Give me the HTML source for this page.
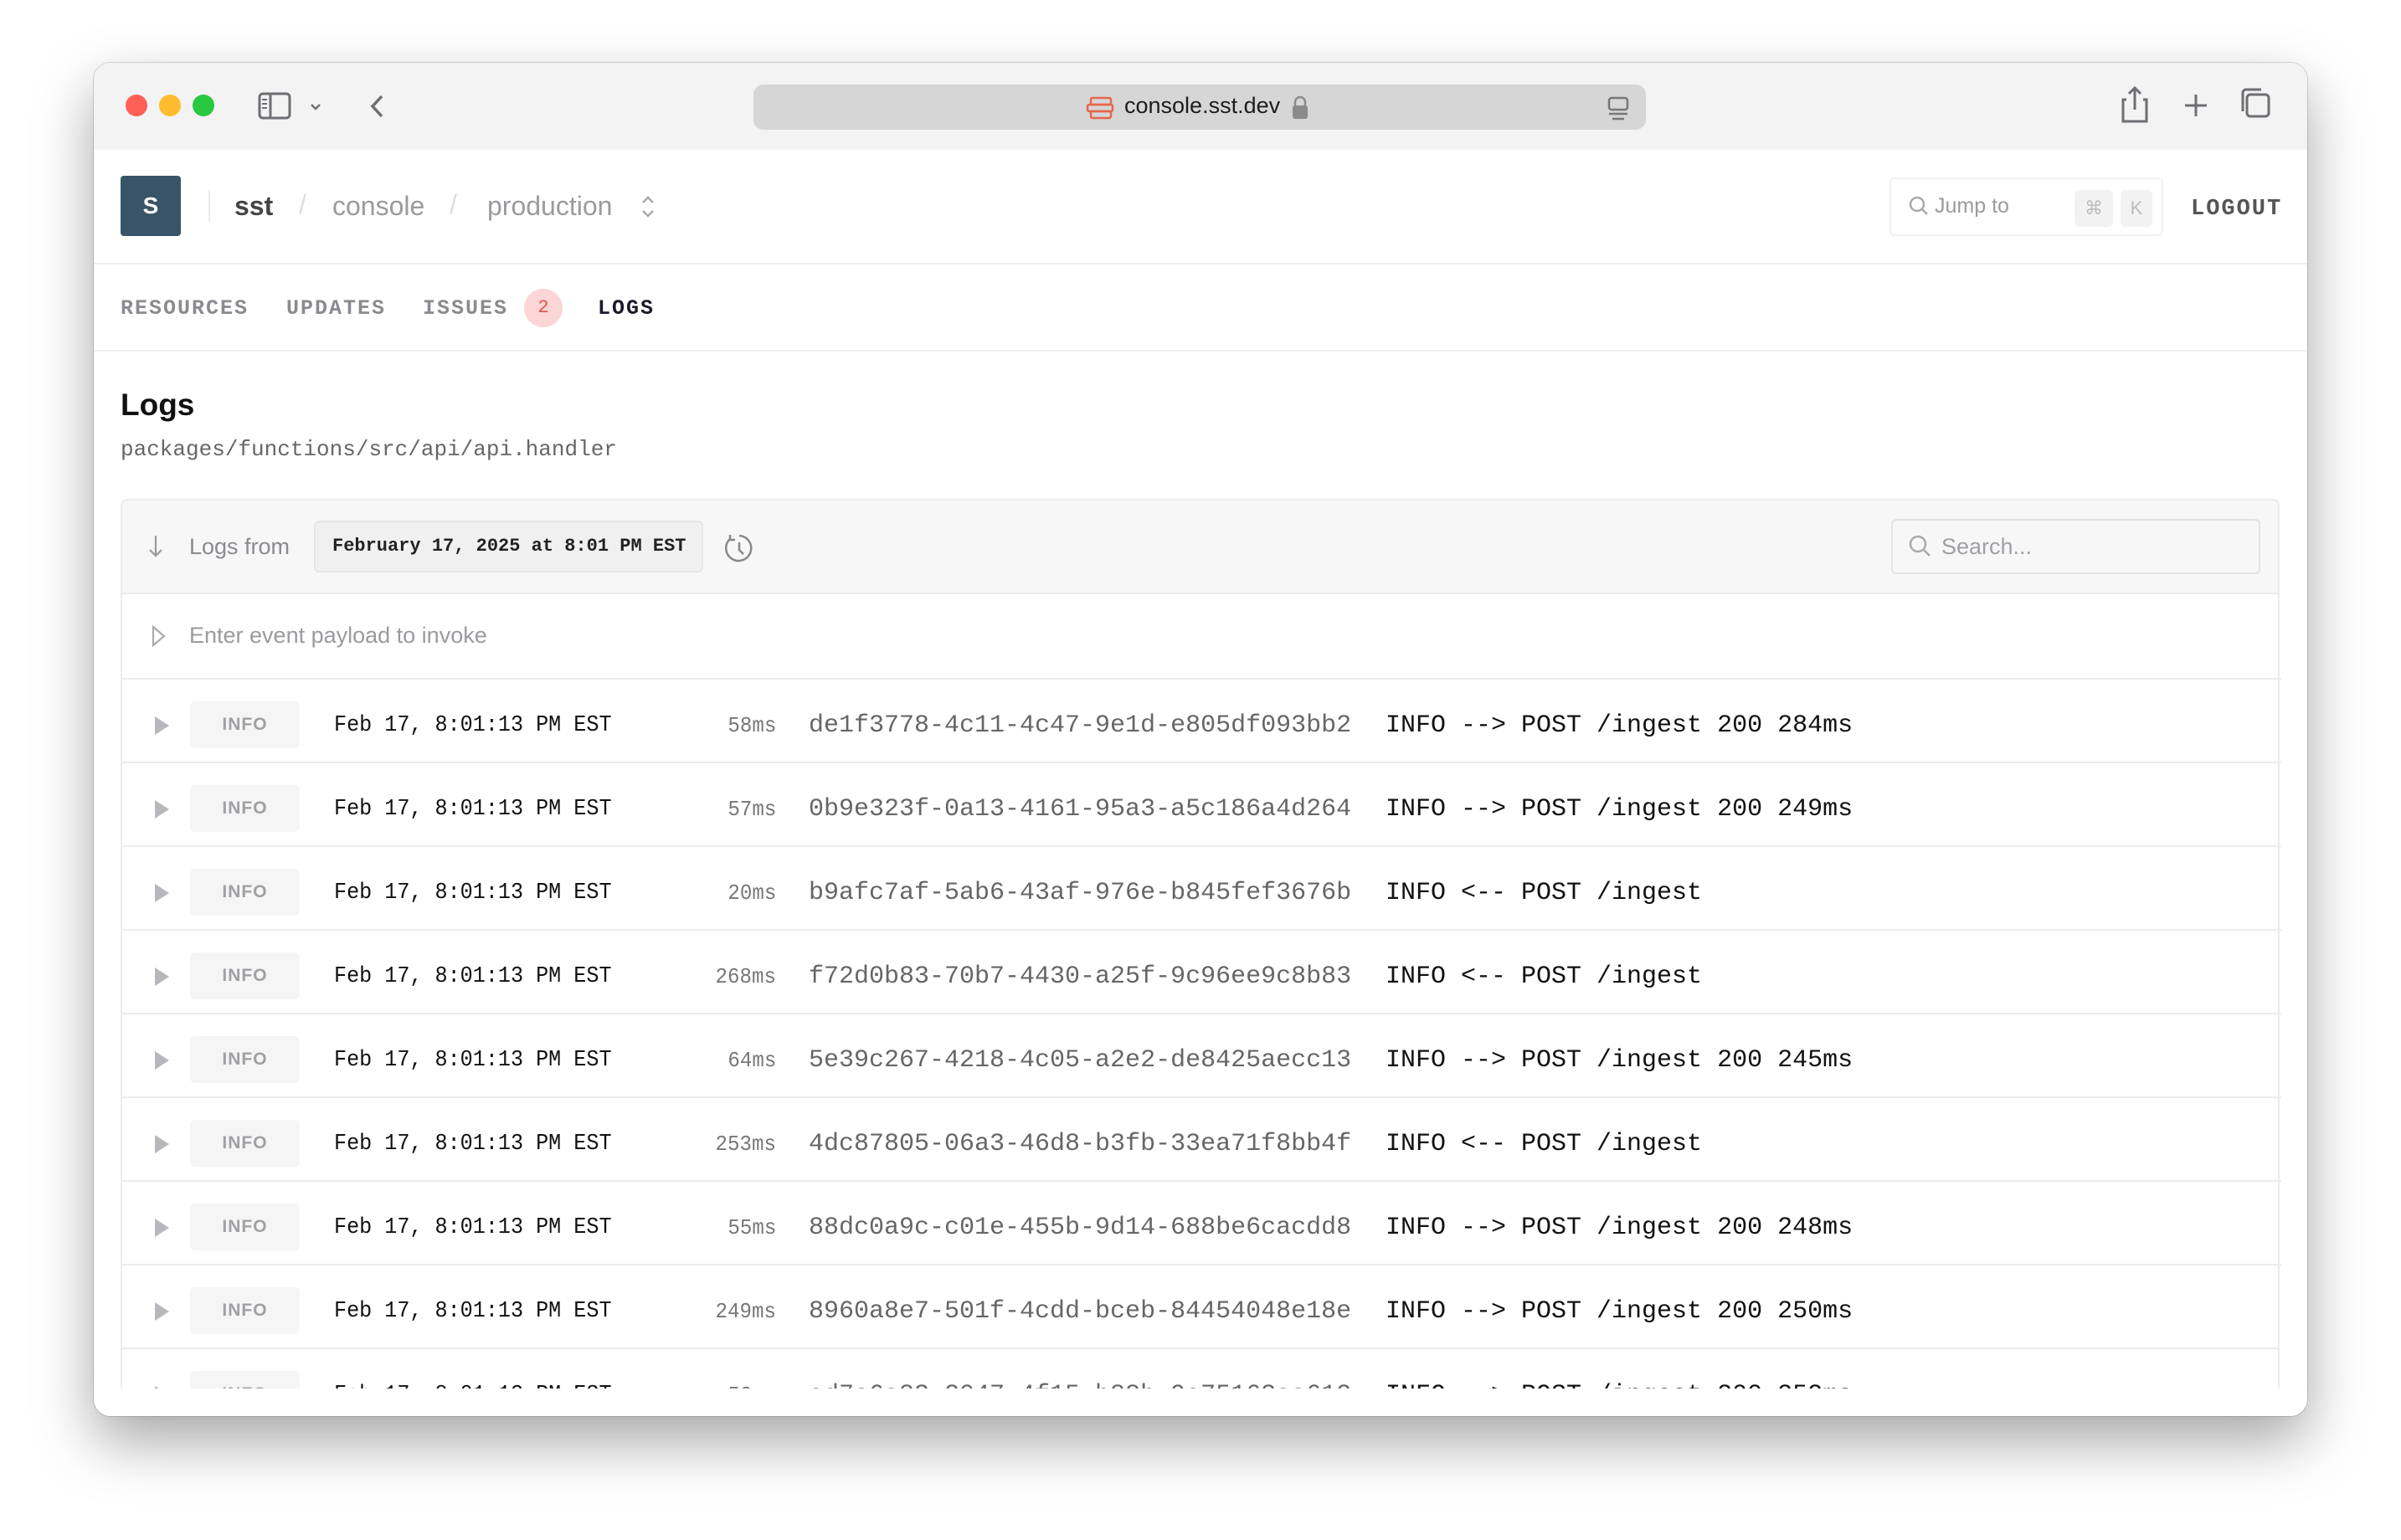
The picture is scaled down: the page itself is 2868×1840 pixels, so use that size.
<!DOCTYPE html>
<html><head><meta charset="utf-8"><style>
*{margin:0;padding:0;box-sizing:border-box}
body{width:2868px;height:1840px;background:#fff;position:relative;overflow:hidden;font-family:"Liberation Sans",sans-serif}
.a{position:absolute}
.win{left:112px;top:75px;width:2644px;height:1617px;border-radius:20px;background:#fff;overflow:hidden;box-shadow:0 30px 70px rgba(0,0,0,.35),0 0 0 1px rgba(0,0,0,.15)}
.bar{left:0;top:0;width:100%;height:104px;background:#f3f3f3}
.mono{font-family:"Liberation Mono",monospace}
.tab{top:279px;font-family:"Liberation Mono",monospace;font-size:25px;letter-spacing:2px;color:#8a8a90;font-weight:bold}
.row{left:144px;width:2579px;height:100px;border-top:2px solid #ececec}
.row .t{position:absolute;left:39px;top:44px;width:0;height:0;border-left:17px solid #b8b8bc;border-top:11px solid transparent;border-bottom:11px solid transparent}
.row .b{position:absolute;left:81px;top:26px;width:131px;height:56px;background:#f5f5f5;border-radius:6px;color:#a0a0a4;font-size:21px;font-weight:bold;text-align:center;line-height:56px;letter-spacing:1px}
.row .d{position:absolute;left:253px;top:40px;font-family:"Liberation Mono",monospace;font-size:27px;transform:scaleX(.93);transform-origin:left;color:#111}
.row .m{position:absolute;right:1798px;top:40px;font-family:"Liberation Mono",monospace;font-size:26px;color:#777;transform:scaleX(.93);transform-origin:right}
.row .i{position:absolute;left:820px;top:38px;font-family:"Liberation Mono",monospace;font-size:30px;color:#666}
.row .g{position:absolute;left:1509px;top:38px;font-family:"Liberation Mono",monospace;font-size:30px;color:#111}
</style></head><body>
<div class="a win">
 <div class="a bar"></div>
 <div class="a" style="left:38px;top:38px;width:26px;height:26px;border-radius:50%;background:#fe5f57"></div>
 <div class="a" style="left:78px;top:38px;width:26px;height:26px;border-radius:50%;background:#febc2e"></div>
 <div class="a" style="left:118px;top:38px;width:26px;height:26px;border-radius:50%;background:#28c840"></div>
 <svg class="a" style="left:196px;top:34px" width="240" height="36" viewBox="0 0 240 36" fill="none" stroke="#6e6e73" stroke-width="3"><rect x="2" y="3" width="36" height="29" rx="4"/><line x1="15" y1="3" x2="15" y2="32"/><path d="M5 10h6M5 15h6M5 20h6" stroke-width="2"/><path d="M64 16l5 5 5-5" stroke-width="2.5"/><path d="M148 6l-11 12 11 12" stroke-width="3.5"/></svg>
 <div class="a" style="left:788px;top:26px;width:1066px;height:54px;background:#d6d6d6;border-radius:12px"></div>
 <svg class="a" style="left:1185px;top:40px" width="36" height="28" viewBox="0 0 36 28" fill="none" stroke="#e5664a" stroke-width="2.5"><rect x="6" y="2" width="24" height="8" rx="2"/><rect x="2" y="10" width="30" height="8" rx="2"/><rect x="6" y="18" width="24" height="8" rx="2"/></svg>
 <div class="a" style="left:1231px;top:36px;font-size:27px;color:#1d1d1f">console.sst.dev</div>
 <svg class="a" style="left:1431px;top:38px" width="20" height="30" viewBox="0 0 20 30"><path d="M4 13V9a6 6 0 0112 0v4" stroke="#8a8a8a" stroke-width="2.5" fill="none"/><rect x="1" y="13" width="18" height="16" rx="3" fill="#8a8a8a"/></svg>
 <svg class="a" style="left:1806px;top:40px" width="30" height="30" viewBox="0 0 30 30" fill="none" stroke="#777" stroke-width="2.5"><rect x="4" y="2" width="22" height="14" rx="3"/><path d="M4 21h22M8 27h14"/></svg>
 <svg class="a" style="left:2420px;top:26px" width="200" height="48" viewBox="0 0 200 48" fill="none" stroke="#6e6e73" stroke-width="3"><path d="M8 18H4v26h28V18h-4M18 4v26M11 11l7-7 7 7"/><path d="M91 12v26M78 25h26"/><rect x="152" y="12" width="26" height="26" rx="4"/><path d="M147 32V10a4 4 0 014-4h18"/></svg>

 <div class="a" style="left:32px;top:135px;width:72px;height:72px;background:#395466;border-radius:4px;color:#fff;font-size:28px;font-weight:bold;text-align:center;line-height:72px">S</div>
 <div class="a" style="left:137px;top:152px;width:2px;height:38px;background:#ececec"></div>
 <div class="a" style="left:168px;top:153px;font-size:32px;color:#444;font-weight:bold">sst</div>
 <div class="a" style="left:245px;top:151px;font-size:32px;color:#ddd">/</div>
 <div class="a" style="left:285px;top:153px;font-size:32px;color:#9a9aa0">console</div>
 <div class="a" style="left:425px;top:151px;font-size:32px;color:#ddd">/</div>
 <div class="a" style="left:470px;top:153px;font-size:32px;color:#9a9aa0">production</div>
 <svg class="a" style="left:652px;top:156px" width="20" height="32" viewBox="0 0 20 32" fill="none" stroke="#aaa" stroke-width="2.5"><path d="M4 11l6-6 6 6M4 21l6 6 6-6"/></svg>
 <div class="a" style="left:2145px;top:137px;width:327px;height:70px;border:2px solid #f0f0f0;border-radius:6px"></div>
 <svg class="a" style="left:2167px;top:158px" width="26" height="26" viewBox="0 0 26 26" fill="none" stroke="#aaa" stroke-width="2.5"><circle cx="11" cy="11" r="8"/><path d="M17 17l6 6"/></svg>
 <div class="a" style="left:2199px;top:157px;font-size:25px;color:#9a9aa0">Jump to</div>
 <div class="a" style="left:2366px;top:152px;width:46px;height:44px;background:#f2f2f3;border-radius:6px;color:#bbb;font-size:22px;text-align:center;line-height:44px">⌘</div>
 <div class="a" style="left:2421px;top:152px;width:38px;height:44px;background:#f2f2f3;border-radius:6px;color:#bbb;font-size:22px;text-align:center;line-height:44px">K</div>
 <div class="a mono" style="left:2505px;top:160px;font-size:27px;font-weight:bold;color:#555;letter-spacing:2px">LOGOUT</div>
 <div class="a" style="left:0;top:239px;width:100%;height:2px;background:#efefef"></div>

 <div class="a tab" style="left:32px">RESOURCES</div>
 <div class="a tab" style="left:230px">UPDATES</div>
 <div class="a tab" style="left:393px">ISSUES</div>
 <div class="a" style="left:514px;top:270px;width:46px;height:46px;border-radius:50%;background:#fcd5d5;color:#e0524f;font-size:22px;text-align:center;line-height:46px;font-family:'Liberation Mono',monospace">2</div>
 <div class="a tab" style="left:602px;color:#1a1a2a">LOGS</div>
 <div class="a" style="left:0;top:343px;width:100%;height:2px;background:#efefef"></div>
</div>

<div class="a" style="left:144px;top:463px;font-size:37px;font-weight:bold;color:#111">Logs</div>
<div class="a mono" style="left:144px;top:522px;font-size:26px;color:#666">packages/functions/src/api/api.handler</div>

<div class="a" style="left:144px;top:596px;width:2579px;height:1063px;border:2px solid #ececec;border-bottom:none;border-radius:8px 8px 0 0;overflow:hidden">
 <div class="a" style="left:0;top:0;width:100%;height:112px;background:#f7f7f7;border-bottom:2px solid #ececec"></div>
 <svg class="a" style="left:30px;top:40px" width="20" height="30" viewBox="0 0 20 30" fill="none" stroke="#999" stroke-width="2.2"><path d="M10 2v24M3 19l7 7 7-7"/></svg>
 <div class="a" style="left:80px;top:40px;font-size:27px;color:#8a8a90">Logs from</div>
 <div class="a mono" style="left:229px;top:24px;width:465px;height:62px;background:#f0f0f0;border:2px solid #e6e6e6;border-radius:6px;font-size:22px;font-weight:bold;color:#222;line-height:58px;padding-left:20px">February 17, 2025 at 8:01 PM EST</div>
 <svg class="a" style="left:717px;top:38px" width="40" height="40" viewBox="0 0 40 40" fill="none" stroke="#888" stroke-width="2.5"><path d="M9 8A15 15 0 1 0 20 4"/><path d="M9 3v6h6" /><path d="M20 12v9l5 5"/></svg>
 <div class="a" style="left:2113px;top:22px;width:441px;height:66px;border:2px solid #e3e3e3;border-radius:6px;background:#f7f7f7"></div>
 <svg class="a" style="left:2133px;top:40px" width="30" height="30" viewBox="0 0 30 30" fill="none" stroke="#aaa" stroke-width="2.5"><circle cx="12" cy="12" r="9"/><path d="M19 19l7 7"/></svg>
 <div class="a" style="left:2173px;top:40px;font-size:27px;color:#a0a0a6">Search...</div>
 <svg class="a" style="left:34px;top:148px" width="20" height="28" viewBox="0 0 20 28" fill="none" stroke="#aaa" stroke-width="2.2"><path d="M3 3l13 11L3 25z"/></svg>
 <div class="a" style="left:80px;top:146px;font-size:27px;color:#9a9aa0">Enter event payload to invoke</div>
</div>

<div class="a row" style="top:810px;left:146px"><div class="t"></div><div class="b">INFO</div><div class="d">Feb 17, 8:01:13 PM EST</div><div class="m">58ms</div><div class="i">de1f3778-4c11-4c47-9e1d-e805df093bb2</div><div class="g">INFO --&gt; POST /ingest 200 284ms</div></div>
<div class="a row" style="top:910px;left:146px"><div class="t"></div><div class="b">INFO</div><div class="d">Feb 17, 8:01:13 PM EST</div><div class="m">57ms</div><div class="i">0b9e323f-0a13-4161-95a3-a5c186a4d264</div><div class="g">INFO --&gt; POST /ingest 200 249ms</div></div>
<div class="a row" style="top:1010px;left:146px"><div class="t"></div><div class="b">INFO</div><div class="d">Feb 17, 8:01:13 PM EST</div><div class="m">20ms</div><div class="i">b9afc7af-5ab6-43af-976e-b845fef3676b</div><div class="g">INFO &lt;-- POST /ingest</div></div>
<div class="a row" style="top:1110px;left:146px"><div class="t"></div><div class="b">INFO</div><div class="d">Feb 17, 8:01:13 PM EST</div><div class="m">268ms</div><div class="i">f72d0b83-70b7-4430-a25f-9c96ee9c8b83</div><div class="g">INFO &lt;-- POST /ingest</div></div>
<div class="a row" style="top:1210px;left:146px"><div class="t"></div><div class="b">INFO</div><div class="d">Feb 17, 8:01:13 PM EST</div><div class="m">64ms</div><div class="i">5e39c267-4218-4c05-a2e2-de8425aecc13</div><div class="g">INFO --&gt; POST /ingest 200 245ms</div></div>
<div class="a row" style="top:1310px;left:146px"><div class="t"></div><div class="b">INFO</div><div class="d">Feb 17, 8:01:13 PM EST</div><div class="m">253ms</div><div class="i">4dc87805-06a3-46d8-b3fb-33ea71f8bb4f</div><div class="g">INFO &lt;-- POST /ingest</div></div>
<div class="a row" style="top:1410px;left:146px"><div class="t"></div><div class="b">INFO</div><div class="d">Feb 17, 8:01:13 PM EST</div><div class="m">55ms</div><div class="i">88dc0a9c-c01e-455b-9d14-688be6cacdd8</div><div class="g">INFO --&gt; POST /ingest 200 248ms</div></div>
<div class="a row" style="top:1510px;left:146px"><div class="t"></div><div class="b">INFO</div><div class="d">Feb 17, 8:01:13 PM EST</div><div class="m">249ms</div><div class="i">8960a8e7-501f-4cdd-bceb-84454048e18e</div><div class="g">INFO --&gt; POST /ingest 200 250ms</div></div>
<div class="a" style="top:1610px;left:146px;width:2575px;height:49px;overflow:hidden"><div class="a row" style="top:0;left:0"><div class="t"></div><div class="b">INFO</div><div class="d">Feb 17, 8:01:13 PM EST</div><div class="m">52ms</div><div class="i">ad7e6a83-2047-4f15-b88b-9e75163aa612</div><div class="g">INFO --&gt; POST /ingest 200 252ms</div></div></div>
</body></html>
